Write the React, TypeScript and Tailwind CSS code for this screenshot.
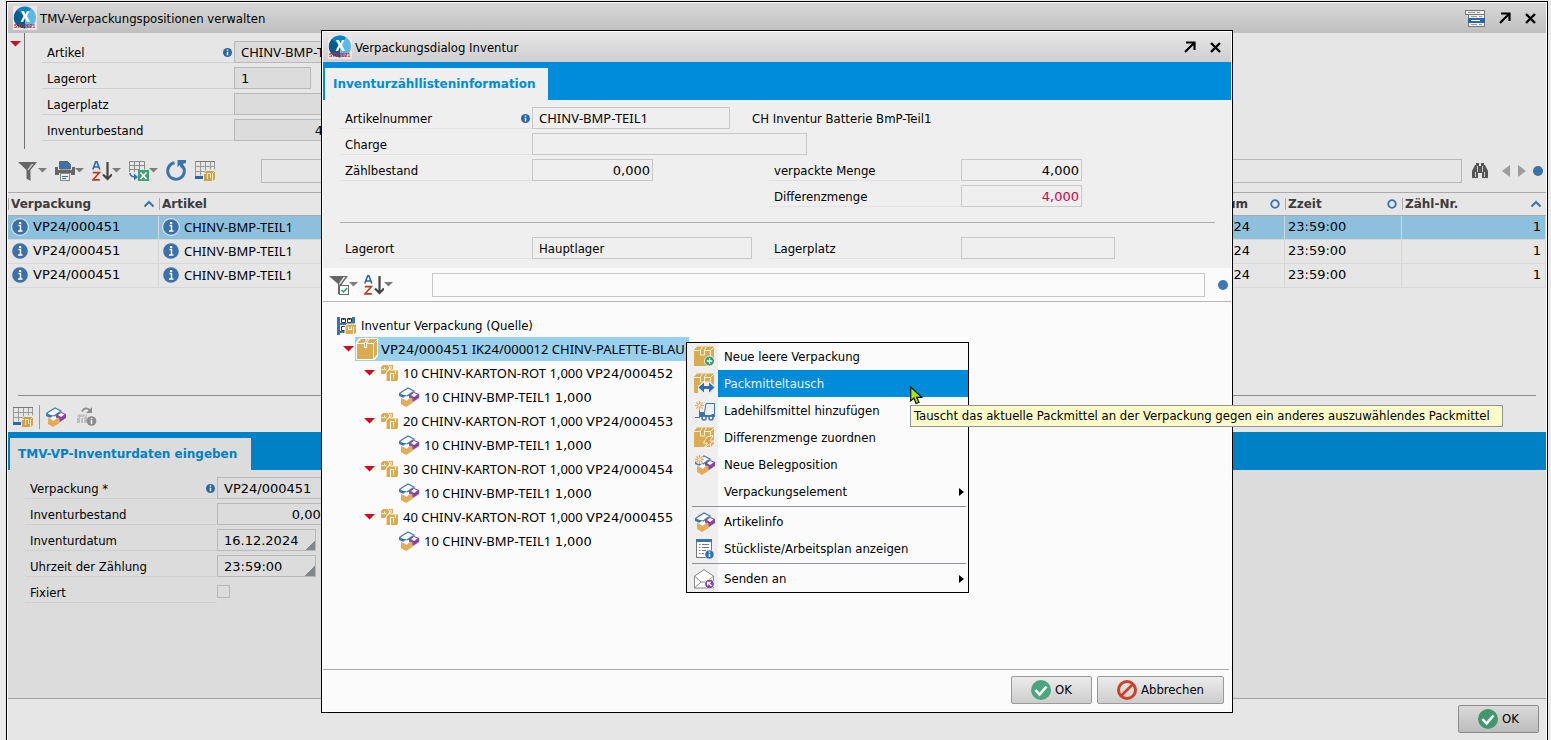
import React from "react";

const textFont = "font-['DejaVu_Sans_Condensed','DejaVu_Sans',sans-serif]";
const codeFont = "font-['Noto_Sans',sans-serif]";
const numberFont = "font-['DejaVu_Sans',sans-serif]";

/* ---------- icons ---------- */

function Logo() {
	return (
		<svg width="24" height="24" viewBox="0 0 24 24" className="shrink-0">
			<rect width="24" height="24" fill="#f2e4e6" />
			<circle cx="12" cy="11.500" r="11" fill="#5bb9e6" />
			<path d="M12 .5a11 11 0 0 0-8 18.500L12 11.500l6-9A11 11 0 0 0 12 .5z" fill="#0b84c6" />
			<path d="M4 4a11 11 0 0 0 2 17l6 1.500V11z" fill="#075c8c" />
			<path d="M8 5h3l1.500 3.500L14 5h2.500L14 10l3 6h-3l-2-4-2 4H7.500l3-6z" fill="#fff" />
			<text x="1" y="22" fontSize="5" fontWeight="bold" fill="#c8202c" fontFamily="Liberation Sans">
				STG2021
			</text>
		</svg>
	);
}

function Caret() {
	return (
		<svg width="9" height="5" viewBox="0 0 9 5" className="shrink-0">
			<path d="M0 0h9L4.500 4.500z" fill="#7d7d7d" />
		</svg>
	);
}

function RedTriangle() {
	return (
		<svg width="11" height="6" viewBox="0 0 11 6" className="shrink-0">
			<path d="M0 0h11L5.500 5.500z" fill="#cf0a23" />
		</svg>
	);
}

function FilterIcon() {
	return (
		<svg width="20" height="20" viewBox="0 0 20 20">
			<path d="M0 1h19l-6.500 8v11l-4-2.500V9z" fill="#666" />
			<path d="M10.500 9.500L15.500 3h-2L9.500 8.500z" fill="#c9c9c9" />
		</svg>
	);
}

function FilterCheckIcon() {
	return (
		<svg width="20" height="20" viewBox="0 0 20 20">
			<path d="M0 1h19l-6 8v3h-1v7h-3V9z" fill="#666" />
			<path d="M10.500 10L16.500 2h-2L10 8.500z" fill="#e6e6e6" />
			<rect x="10.500" y="10.500" width="9" height="9" fill="#fff" stroke="#666" />
			<path d="M12.500 15l2 2 3.500-4" fill="none" stroke="#2a9a6c" strokeWidth="1.500" />
		</svg>
	);
}

function PrinterIcon() {
	return (
		<svg width="20" height="20" viewBox="0 0 20 20">
			<path d="M4.500 .5h8l3 3V8h-11z" fill="#3b70a8" stroke="#666" />
			<path d="M0 6h3v3h14V6h3v8h-4v-2H4v2H0z" fill="#666" />
			<rect x="5.500" y="12.500" width="9" height="7" fill="#eee" stroke="#888" />
			<path d="M7 15.500h6M7 17.500h4" stroke="#3b70a8" />
		</svg>
	);
}

function SortIcon() {
	return (
		<svg width="20" height="20" viewBox="0 0 20 20">
			<path d="M.8 8.500L3.800.5h1l3 8M2 6h5" fill="none" stroke="#2868ae" strokeWidth="1.600" />
			<path d="M.8 11.700h6.500L1 18.800h6.800" fill="none" stroke="#c5361f" strokeWidth="1.700" />
			<path d="M15.500 1v17M11 13.500l4.500 4.500 4.500-4.500" fill="none" stroke="#444" strokeWidth="2.200" />
		</svg>
	);
}

function ExportIcon() {
	return (
		<svg width="20" height="20" viewBox="0 0 20 20">
			<path d="M.5 11V.5h15v8M.5 4.500h15M.5 8.500H11M5.500.5V11M10.500.5v8" fill="none" stroke="#8a8a8a" />
			<path d="M1 12c0 3 2 4 6 4" fill="none" stroke="#3b70a8" strokeWidth="1.600" />
			<path d="M5 12.500L9 16l-4 3.500z" fill="#3b70a8" />
			<rect x="9" y="9" width="11" height="11" fill="#3aa272" />
			<path d="M11.500 11.500l6 6.500M17.500 11.500l-6 6.500" stroke="#fff" strokeWidth="1.800" />
		</svg>
	);
}

function ReloadIcon() {
	return (
		<svg width="21" height="21" viewBox="0 0 21 21">
			<path d="M8.500 2.800A8.300 8.300 0 1 0 17.300 7" fill="none" stroke="#3b73ae" strokeWidth="3" />
			<path d="M11.500 0H20v3l-3 .8 1.500 3.200-3 1.500L13.500 5l-2 2.500z" fill="#3b73ae" />
		</svg>
	);
}

function TableBoxIcon() {
	return (
		<svg width="20" height="20" viewBox="0 0 20 20">
			<path d="M.5 15V.5h19v8M.5 5.500h19M.5 10.500h9M5.500.5v14M10.500.5v9M15.500.5v8" fill="none" stroke="#999" />
			<path d="M0 .5h20" stroke="#777" />
			<path d="M0 15h8v3H0z" fill="#2a67a8" />
			<path d="M9 12l2-2h9v8l-2 2H9z" fill="#cfa045" />
			<path d="M12.500 18v-5.500h3V17M9 12.500h2M17.500 12.500V20M17.500 12.500L20 10" fill="none" stroke="#f6ead0" />
		</svg>
	);
}

// three stacked parts: blue, purple and orange
function PartShapes() {
	return (
		<>
			<path d="M1 6l8-5 6 3-7 5-7-1z" fill="#fff" stroke="#3b78b8" strokeWidth="1.200" />
			<path d="M0 6l7 3v3L0 9z" fill="#3b78b8" />
			<path d="M10 8l5-3 5 2v4l-6 4-4-3z" fill="#8546a4" />
			<path d="M12 8l3-2 3.500 1.500L15 10z" fill="#fff" />
			<path d="M2 11l5 2 5-2.500 1.500 1V16L7 20l-5-3z" fill="#e5ab58" />
			<path d="M4 11l3-2 4 2-3.500 3z" fill="#fff" />
		</>
	);
}

function PartsIcon() {
	return (
		<svg width="20" height="20" viewBox="0 0 20 20" className="shrink-0">
			<PartShapes />
		</svg>
	);
}

function Star() {
	return (
		<>
			<path d="M4.500 0v9M0 4.500h9M1.300 1.300l6.400 6.400M7.700 1.300L1.300 7.700" stroke="#e8a54a" strokeWidth="1.200" />
			<circle cx="4.500" cy="4.500" r="1.200" fill="#fff" />
		</>
	);
}

function NewPartsIcon() {
	return (
		<svg width="20" height="20" viewBox="0 0 20 20" className="shrink-0">
			<PartShapes />
			<circle cx="4.500" cy="4.500" r="4.500" fill="#efefef" />
			<Star />
		</svg>
	);
}

function GreyInfoIcon() {
	return (
		<svg width="20" height="20" viewBox="0 0 20 20">
			<path d="M5 4.500c2-4 6-4 8-1" fill="none" stroke="#8d8d8d" strokeWidth="1.800" />
			<path d="M15 0v6H9z" fill="#8d8d8d" />
			<path d="M0 9l1.500-1.500H10V16H0z" fill="#bdbdbd" />
			<path d="M3.500 16v-5.500h3V16M8.500 7.500L7 10.500M0 10.500h2" fill="none" stroke="#e6e6e6" />
			<circle cx="14.500" cy="14" r="4.800" fill="#8d8d8d" />
			<path d="M14.500 13v4M14.500 11v1.300" stroke="#eee" strokeWidth="1.600" />
		</svg>
	);
}

function BoxShapes() {
	return (
		<>
			<path d="M0 4l3-3.500h17v16L17 20H0z" fill="#d9ac52" />
			<path
				d="M0 4.500h6.500M10.500 4.500h6M16.500 4.500V20M16.500 4.500L20 1M8.500 .5L6.500 4v5h4V4l2-3.500"
				fill="none"
				stroke="#f8eed6"
			/>
		</>
	);
}

function BoxIcon() {
	return (
		<svg width="22" height="22" viewBox="0 0 22 22" className="shrink-0">
			<path d="M0 4l4-4h16l2 1v17l-3.500 4H0z" fill="#fff" />
			<path d="M1 5l4-4h16v15.500L17.500 21H1z" fill="#d9ac52" />
			<path d="M1 5.500h7M11 5.500h6.500V21M17.500 5.500L21 2" fill="none" stroke="#fff" />
			<path d="M10.500 1L8 5v5h3V5l2.500-4z" fill="#fff" />
			<path d="M9.500 5v4M10 4l2-3" stroke="#d9ac52" />
		</svg>
	);
}

function BoxesIcon() {
	return (
		<svg width="18" height="18" viewBox="0 0 18 18" className="shrink-0">
			<path d="M0 3l2-2h10v9H0z" fill="#d9ac52" />
			<path d="M3.500 3.500v2h2M7 1l1.500 2v3M.5 5.500h2M10 2v3" fill="none" stroke="#fff" />
			<path d="M5 9l2-3h10.500v10l-2 1.500H5z" fill="#d9ac52" stroke="#fff" />
			<path d="M9.500 17.500V9.500h3v5M14.500 7v3" fill="none" stroke="#fff" />
		</svg>
	);
}

function WarehouseIcon() {
	return (
		<svg width="20" height="18" viewBox="0 0 20 18" className="shrink-0">
			<path d="M0 0h3v18H0zM15 0h3v8h-3zM0 6h18v2H0zM0 14h8v2H0z" fill="#3b73ae" />
			<path d="M4.500 1.500h4v4h-4zM10.500 1.500h4v4h-4zM4.500 9.500h4v4h-4z" fill="#fff" stroke="#333" />
			<path d="M6.500 1v2M12.500 1v2" stroke="#333" strokeWidth="2" />
			<path d="M8 10l2-3h9.500v8.500l-2 2H8z" fill="#d9ac52" stroke="#fff" />
			<path d="M11.500 9.500v3h3v-3M16.500 10v7" fill="none" stroke="#fff" />
		</svg>
	);
}

function BoxPlusIcon() {
	return (
		<svg width="21" height="21" viewBox="0 0 21 21">
			<BoxShapes />
			<circle cx="15.500" cy="15" r="5" fill="#3a9d70" stroke="#efefef" />
			<path d="M12.800 15h5.400M15.500 12.300v5.400" stroke="#fff" strokeWidth="1.300" />
		</svg>
	);
}

function BoxSwapIcon() {
	return (
		<svg width="21" height="21" viewBox="0 0 21 21">
			<BoxShapes />
			<path d="M4 20.500V13l6-4.500h5l6 4v8z" fill="#efefef" />
			<path d="M4.500 14.500L10 9.500v3.500h5V9.500l5.500 5-5.500 5V16h-5v3.500z" fill="#2e6fb4" />
		</svg>
	);
}

function BoxFlashIcon() {
	return (
		<svg width="21" height="21" viewBox="0 0 21 21">
			<BoxShapes />
			<path d="M19 8.500l-6 1.500-3.500 6h4L10 21l10-7h-4z" fill="#f09a2e" stroke="#efefef" />
		</svg>
	);
}

function TruckIcon() {
	return (
		<svg width="20" height="20" viewBox="0 0 20 20">
			<Star />
			<path d="M0 16.500h4.500V9.500M4.500 11.500h5l1.500-9h8.500v11h-3M9.500 11.500v3" fill="none" stroke="#3b73ae" />
			<path d="M5 12h5v2h10v2H5z" fill="#3b73ae" />
			<circle cx="9" cy="17" r="2" fill="#fff" stroke="#3b73ae" strokeWidth="1.500" />
			<circle cx="16" cy="17" r="2" fill="#fff" stroke="#3b73ae" strokeWidth="1.500" />
		</svg>
	);
}

function ListInfoIcon() {
	return (
		<svg width="18" height="20" viewBox="0 0 18 20">
			<rect x=".5" y=".5" width="15" height="18" fill="#fff" stroke="#777" />
			<path d="M0 0h16v3H0z" fill="#3b73ae" />
			<path d="M3 5.500h1.500M6 5.500h7M3 8.500h1.500M6 8.500h7M3 11.500h1.500M6 11.500h4M3 14.500h1.500M6 14.500h2" stroke="#777" />
			<circle cx="13.500" cy="15.500" r="4.500" fill="#2e6fb4" stroke="#efefef" strokeWidth=".6" />
			<path d="M13.500 14.700v3.300M13.500 12.500v1.300" stroke="#fff" strokeWidth="1.500" />
		</svg>
	);
}

function MailIcon() {
	return (
		<svg width="21" height="20" viewBox="0 0 21 20">
			<path d="M.5 7L10 .5 19.500 7v12H.5z" fill="#fff" stroke="#888" />
			<path d="M.5 7l6.500 6h6l6.500-6M.5 19L7 13" fill="none" stroke="#888" />
			<circle cx="15.500" cy="15" r="4.800" fill="#8546a4" stroke="#efefef" />
			<path d="M17.500 17l-3-3M13.700 16.500v-3.200H17" fill="none" stroke="#fff" strokeWidth="1.300" />
		</svg>
	);
}

function InfoDot() {
	return (
		<svg width="9" height="9" viewBox="0 0 9 9" className="shrink-0">
			<circle cx="4.500" cy="4.500" r="4.500" fill="#2b66a8" />
			<path d="M4.500 3.800v3.500M4.500 1.500v1.300" stroke="#fff" strokeWidth="1.500" />
		</svg>
	);
}

function InfoBadge({ selected }: { selected?: boolean }) {
	return (
		<svg width="18" height="18" viewBox="0 0 18 18" className="shrink-0">
			{selected && <circle cx="9" cy="9" r="9" fill="#dbe6ee" />}
			<circle cx="9" cy="9" r="7.800" fill="#3b70a8" />
			<path d="M7.500 7.500h2v5M7 13h4.500" fill="none" stroke="#fff" strokeWidth="1.400" />
			<path d="M8 4h2.200v2H8z" fill="#fff" />
		</svg>
	);
}

function BinocularsIcon() {
	return (
		<svg width="16" height="17" viewBox="0 0 16 17">
			<path d="M3 3h1V1h3v3h2V1h3v2h1l3 6v7h-6v-5H6v5H0V9z" fill="#555" />
			<path d="M5.500 4v6M10.500 4v6M3.500 10v5M12.500 10v5" stroke="#ccc" />
		</svg>
	);
}

function ExpandIcon() {
	return (
		<svg width="12" height="12" viewBox="0 0 12 12">
			<path d="M1 11L10 2M2 1.500h8.500V9" fill="none" stroke="#000" strokeWidth="2.200" />
		</svg>
	);
}

function CloseIcon() {
	return (
		<svg width="11" height="11" viewBox="0 0 11 11">
			<path d="M1 1l9 9M10 1L1 10" stroke="#000" strokeWidth="2.400" />
		</svg>
	);
}

function MenuWindowIcon() {
	return (
		<svg width="20" height="17" viewBox="0 0 20 17">
			<rect x=".5" y=".5" width="19" height="4" fill="#eee" stroke="#777" />
			<rect x="3.500" y="4.500" width="16" height="12" fill="#eee" stroke="#777" />
			<path d="M3 8h17v5H3z" fill="#2e66a5" />
			<path d="M3 2.500h7M12 2.500h3M6 6.500h6M14 6.500h3M6 14.500h6M14 14.500h3" stroke="#999" />
			<path d="M6 10.500h9" stroke="#fff" />
		</svg>
	);
}

function CheckCircle({ dark }: { dark?: boolean }) {
	return (
		<svg width="20" height="20" viewBox="0 0 20 20">
			<circle cx="10" cy="10" r="10" fill={dark ? "#42966f" : "#49a681"} />
			<path d="M4.500 10l4 4.500 7-8" fill="none" stroke="#fff" strokeWidth="2.600" />
		</svg>
	);
}

function CancelCircle() {
	return (
		<svg width="20" height="20" viewBox="0 0 20 20">
			<circle cx="10" cy="10" r="8.500" fill="none" stroke="#cb4229" strokeWidth="3" />
			<path d="M4 16L16 4" stroke="#cb4229" strokeWidth="2.600" />
		</svg>
	);
}

function Cursor() {
	return (
		<svg width="13" height="19" viewBox="0 0 13 19">
			<path d="M.7 1v14l3.300-3 2 5.500 3-1-2.300-5.200h5z" fill="#a6e800" stroke="#111" strokeWidth="1.200" />
		</svg>
	);
}

/* ---------- building blocks ---------- */

type FieldProps = {
	id: string;
	label: string;
	info?: boolean;
	tone?: "dark" | "light";
	className?: string;
	children: React.ReactNode;
};

function Field({ id, label, info, tone = "dark", className = "", children }: FieldProps) {
	return (
		<div className={`flex h-[22px] ${className}`}>
			<label
				htmlFor={id}
				className={`flex w-48 shrink-0 items-center justify-between border-b pt-0.5 pr-0.5 pl-[5px] ${
					tone === "dark" ? "border-[#cfcfcf]" : "border-[#e2e2e2]"
				}`}
			>
				{label}
				{info && <InfoDot />}
			</label>
			{children}
		</div>
	);
}

type BoxProps = { id: string; value?: string; tone?: "dark" | "light"; className: string };

function TextBox({ id, value = "", tone = "dark", className }: BoxProps) {
	return (
		<input
			id={id}
			readOnly
			defaultValue={value}
			className={`h-[22px] border outline-none ${
				tone === "dark" ? "border-[#b8b8b8] bg-[#dcdcdc]" : "border-[#c8c8c8] bg-[#efefef]"
			} ${className}`}
		/>
	);
}

function ToolButton({ label, caret, children }: { label: string; caret?: boolean; children: React.ReactNode }) {
	return (
		<button aria-label={label} className="flex items-center">
			{children}
			{caret && <Caret />}
		</button>
	);
}

function SortMark({ kind }: { kind: "up" | "none" }) {
	return (
		<svg width="10" height="10" viewBox="0 0 10 10" className="shrink-0">
			{kind === "up" ? (
				<path d="M.5 7.500L5 3l4.500 4.500" fill="none" stroke="#3b73ae" strokeWidth="2" />
			) : (
				<circle cx="5" cy="5" r="3.800" fill="none" stroke="#3b73ae" strokeWidth="1.800" />
			)}
		</svg>
	);
}

/* ---------- main window ---------- */

const columns: { title: string; sort: "up" | "none" }[] = [
	{ title: "Verpackung", sort: "up" },
	{ title: "Artikel", sort: "none" },
	{ title: "Zähldatum", sort: "none" },
	{ title: "Zzeit", sort: "none" },
	{ title: "Zähl-Nr.", sort: "up" },
];

const rows = [1, 2, 3];

function PositionTable() {
	return (
		<table className="w-full table-fixed border-separate border-spacing-0">
			<colgroup>
				<col className="w-[151px]" />
				<col />
				<col className="w-[113px]" />
				<col className="w-[117px]" />
				<col className="w-[144px]" />
			</colgroup>
			<thead>
				<tr className={`${numberFont} text-xs font-bold text-[#3c3c3c]`}>
					{columns.map((column) => (
						<th key={column.title} className="h-6 border-y border-[#aaa] p-0 text-left">
							<div className="flex h-3 items-center justify-between border-l border-[#aaa] pr-[5px] pl-0.5 leading-3">
								{column.title}
								<SortMark kind={column.sort} />
							</div>
						</th>
					))}
				</tr>
			</thead>
			<tbody>
				{rows.map((row) => {
					const selected = row === 1;
					const cell = `h-6 border-b border-r border-[#d7d7d7] px-0 pt-0 pb-0.5 ${selected ? "bg-[#8dc0dd]" : ""}`;
					return (
						<tr key={row}>
							<td className={cell}>
								<div className={`flex items-center gap-1 pl-[3px] ${numberFont}`}>
									<InfoBadge selected={selected} />
									VP24/000451
								</div>
							</td>
							<td className={cell}>
								<div className={`flex items-center gap-1 pl-[3px] ${codeFont}`}>
									<InfoBadge selected={selected} />
									CHINV-BMP-TEIL1
								</div>
							</td>
							<td className={`${cell} text-right ${numberFont}`}>
								<span className="pr-[34px]">16.12.24</span>
							</td>
							<td className={`${cell} ${numberFont}`}>
								<span className="pl-[3px]">23:59:00</span>
							</td>
							<td className={`${cell} text-right ${numberFont}`}>
								<span className="pr-1">1</span>
							</td>
						</tr>
					);
				})}
			</tbody>
		</table>
	);
}

function MainWindow() {
	return (
		<section className="mt-px mr-[3px] ml-1.5 flex flex-1 flex-col border border-b-0 border-black">
			<div className="flex flex-1 flex-col border border-b-0 border-white bg-[#e6e6e6]">
				<header className="flex h-[30px] items-center bg-gradient-to-b from-[#d8d8d8] to-[#bfbfbf] pr-2.5 pl-[5px]">
					<Logo />
					<h1 className="flex-1 pt-0.5 pl-[3px]">TMV-Verpackungspositionen verwalten</h1>
					<div className="flex items-center gap-3.5">
						<button aria-label="Menü"><MenuWindowIcon /></button>
						<button aria-label="Maximieren"><ExpandIcon /></button>
						<button aria-label="Schließen"><CloseIcon /></button>
					</div>
				</header>

				<div className="flex">
					<div className="w-4 pt-2 pl-0.5">
						<RedTriangle />
					</div>
					<div className="flex flex-1 flex-col gap-1 border-l border-[#707070] py-2 pl-[17px]">
						<Field id="artikel" label="Artikel" info>
							<TextBox id="artikel" value="CHINV-BMP-TEIL1" className={`w-[198px] px-1.5 ${codeFont}`} />
						</Field>
						<Field id="lagerort" label="Lagerort">
							<TextBox id="lagerort" value="1" className={`w-[77px] px-1.5 ${numberFont}`} />
						</Field>
						<Field id="lagerplatz" label="Lagerplatz">
							<TextBox id="lagerplatz" className="w-[154px]" />
						</Field>
						<Field id="bestand" label="Inventurbestand">
							<TextBox id="bestand" value="4,000" className={`w-[121px] px-0.5 text-right ${numberFont}`} />
						</Field>
					</div>
				</div>

				<div className="flex h-[43px] items-center pl-2.5">
					<div className="flex w-[243px] items-center gap-2">
						<ToolButton label="Filter" caret><FilterIcon /></ToolButton>
						<ToolButton label="Drucken" caret><PrinterIcon /></ToolButton>
						<ToolButton label="Sortieren" caret><SortIcon /></ToolButton>
						<ToolButton label="Exportieren" caret><ExportIcon /></ToolButton>
						<ToolButton label="Aktualisieren"><ReloadIcon /></ToolButton>
						<ToolButton label="Tabelle"><TableBoxIcon /></ToolButton>
					</div>
					<input aria-label="Suche" className="h-6 flex-1 border border-[#b8b8b8] bg-[#e6e6e6] px-1.5" />
					<div className="flex w-[84px] items-center pl-2.5">
						<button aria-label="Suchen"><BinocularsIcon /></button>
						<button aria-label="Zurück" className="ml-3.5">
							<svg width="8" height="12" viewBox="0 0 8 12"><path d="M8 0v12L0 6z" fill="#9c9c9c" /></svg>
						</button>
						<button aria-label="Weiter" className="ml-2">
							<svg width="8" height="12" viewBox="0 0 8 12"><path d="M0 0v12l8-6z" fill="#9c9c9c" /></svg>
						</button>
						<span className="ml-[7px] size-2.5 rounded-full bg-[#3b70a8]" />
					</div>
				</div>

				<PositionTable />
				<div className="h-[107px]" />
				<hr className="mx-2.5 border-[#8c8c8c]" />

				<div className="flex h-9 items-center pt-1.5 pl-[5px]">
					<button aria-label="Tabelle"><TableBoxIcon /></button>
					<div className="mx-1.5 h-6 border-l border-[#9a9a9a]" />
					<button aria-label="Teile"><PartsIcon /></button>
					<button aria-label="Packmittelinfo" className="ml-[11px]"><GreyInfoIcon /></button>
				</div>

				<div className="flex h-[38px] bg-[#0081c6] pt-1.5 pl-0.5">
					<button className={`w-[241px] bg-[#dcdcdc] pl-2 text-left text-xs font-bold text-[#0081c6] ${numberFont}`}>
						TMV-VP-Inventurdaten eingeben
					</button>
				</div>
				<div className="flex flex-1 flex-col gap-1 bg-[#dcdcdc] pt-[7px] pl-[17px]">
					<Field id="verpackung" label="Verpackung *" info>
						<TextBox id="verpackung" value="VP24/000451" className={`w-[198px] px-1.5 ${numberFont}`} />
					</Field>
					<Field id="inventurbestand" label="Inventurbestand">
						<TextBox id="inventurbestand" value="0,000" className={`w-[115px] px-0.5 text-right ${numberFont}`} />
					</Field>
					<Field id="datum" label="Inventurdatum">
						<div className="relative">
							<TextBox id="datum" value="16.12.2024" className={`w-[99px] px-1.5 ${numberFont}`} />
							<span className="absolute right-px bottom-px size-2.5 bg-[linear-gradient(135deg,transparent_50%,#82878c_50%)]" />
						</div>
					</Field>
					<Field id="uhrzeit" label="Uhrzeit der Zählung">
						<div className="relative">
							<TextBox id="uhrzeit" value="23:59:00" className={`w-[99px] px-1.5 ${numberFont}`} />
							<span className="absolute right-px bottom-px size-2.5 bg-[linear-gradient(135deg,transparent_50%,#82878c_50%)]" />
						</div>
					</Field>
					<Field id="fixiert" label="Fixiert">
						<input
							id="fixiert"
							type="checkbox"
							className="mt-1 size-[13px] appearance-none border border-[#b8b8b8]"
						/>
					</Field>
				</div>

				<footer className="flex h-[42px] items-start justify-end border-t border-[#a0a0a0] pt-1.5 pr-[7px]">
					<button className="flex h-7 w-[81px] items-center justify-center gap-1 rounded-xs border border-[#8a8a8a] bg-gradient-to-b from-[#dadada] to-[#bdbdbd]">
						<CheckCircle dark />
						OK
					</button>
				</footer>
			</div>
		</section>
	);
}

/* ---------- dialog ---------- */

const cartons = [
	{ name: "10 CHINV-KARTON-ROT 1,000", pack: "VP24/000452" },
	{ name: "20 CHINV-KARTON-ROT 1,000", pack: "VP24/000453" },
	{ name: "30 CHINV-KARTON-ROT 1,000", pack: "VP24/000454" },
	{ name: "40 CHINV-KARTON-ROT 1,000", pack: "VP24/000455" },
];

function PackingTree() {
	return (
		<ul className={`flex-1 pt-[11px] pl-3.5 ${codeFont}`}>
			<li>
				<div className={`flex h-6 items-center gap-1 pt-0.5 ${textFont}`}>
					<WarehouseIcon />
					Inventur Verpackung (Quelle)
				</div>
				<ul className="pl-1.5">
					<li>
						<div className="flex h-6 items-center">
							<RedTriangle />
							<div className="ml-px flex h-6 w-[334px] items-center gap-[3px] bg-[#99d0ee] pl-px whitespace-nowrap">
								<BoxIcon />
								<span>
									<span className={numberFont}>VP24/000451</span> IK24/000012 CHINV-PALETTE-BLAU
								</span>
							</div>
						</div>
						<ul className="pl-[21px]">
							{cartons.map((carton) => (
								<li key={carton.pack}>
									<div className="flex h-6 items-center">
										<RedTriangle />
										<div className="flex items-center gap-1 pl-1.5">
											<BoxesIcon />
											<span>
												{carton.name} <span className={numberFont}>{carton.pack}</span>
											</span>
										</div>
									</div>
									<div className="flex h-6 items-center gap-[5px] pl-[35px]">
										<PartsIcon />
										<span>
											10 CHINV-BMP-TEIL1 <span className={numberFont}>1,000</span>
										</span>
									</div>
								</li>
							))}
						</ul>
					</li>
				</ul>
			</li>
		</ul>
	);
}

function PackingDialog() {
	return (
		<section
			role="dialog"
			aria-label="Verpackungsdialog Inventur"
			className="absolute top-[30px] right-[318px] left-[321px] h-[683px] border border-black"
		>
			<div className="flex h-full flex-col border border-white bg-[#fbfbfb]">
				<header className="flex h-[30px] items-center bg-gradient-to-b from-[#e7e7e7] to-[#cecece] pr-2.5 pl-[5px]">
					<Logo />
					<h2 className="flex-1 pt-0.5 pl-[3px]">Verpackungsdialog Inventur</h2>
					<div className="flex items-center gap-3.5">
						<button aria-label="Maximieren"><ExpandIcon /></button>
						<button aria-label="Schließen"><CloseIcon /></button>
					</div>
				</header>
				<div className="flex h-[38px] bg-[#008cd9] pt-1.5 pl-0.5">
					<button className={`w-[223px] bg-[#efefef] pl-2 text-left text-xs font-bold text-[#008cd9] ${numberFont}`}>
						Inventurzähllisteninformation
					</button>
				</div>

				<div className="bg-[#efefef] pt-[7px] pr-4 pb-[9px] pl-[17px]">
					<div className="grid grid-cols-[429px_1fr] gap-y-1">
						<Field id="nummer" label="Artikelnummer" info tone="light" className="col-span-2">
							<TextBox id="nummer" tone="light" value="CHINV-BMP-TEIL1" className={`w-[198px] px-1.5 ${codeFont}`} />
							<span className="self-center pt-0.5 pl-[22px]">CH Inventur Batterie BmP-Teil1</span>
						</Field>
						<Field id="charge" label="Charge" tone="light" className="col-span-2">
							<TextBox id="charge" tone="light" className="w-[275px]" />
						</Field>
						<Field id="zaehl" label="Zählbestand" tone="light">
							<TextBox id="zaehl" tone="light" value="0,000" className={`w-[121px] px-0.5 text-right ${numberFont}`} />
						</Field>
						<Field id="menge" label="verpackte Menge" tone="light">
							<TextBox id="menge" tone="light" value="4,000" className={`w-[121px] px-0.5 text-right ${numberFont}`} />
						</Field>
						<Field id="differenz" label="Differenzmenge" tone="light" className="col-start-2">
							<TextBox
								id="differenz"
								tone="light"
								value="4,000"
								className={`w-[121px] px-0.5 text-right text-[#cf0044] ${numberFont}`}
							/>
						</Field>
					</div>
					<hr className="mt-[15px] mb-3.5 border-[#aaa]" />
					<div className="grid grid-cols-[429px_1fr]">
						<Field id="ort" label="Lagerort" tone="light">
							<TextBox id="ort" tone="light" value="Hauptlager" className="w-[220px] px-1.5" />
						</Field>
						<Field id="platz" label="Lagerplatz" tone="light">
							<TextBox id="platz" tone="light" className="w-[154px]" />
						</Field>
					</div>
				</div>

				<div className="flex h-[34px] items-center border-b border-[#b5b5b5] pl-1.5">
					<div className="flex w-[103px] items-center gap-1.5">
						<ToolButton label="Filter" caret><FilterCheckIcon /></ToolButton>
						<ToolButton label="Sortieren" caret><SortIcon /></ToolButton>
					</div>
					<input aria-label="Suche" className="h-6 flex-1 border border-[#c8c8c8] bg-[#fbfbfb] px-1.5" />
					<span className="mr-[3px] ml-[13px] size-2.5 rounded-full bg-[#3b78b8]" />
				</div>

				<PackingTree />

				<footer className="mr-0.5 flex h-[42px] items-start justify-end gap-[5px] border-t border-[#a8a8a8] pt-1.5 pr-[5px]">
					<button className="flex h-7 w-[81px] items-center justify-center gap-1 rounded-xs border border-[#9a9a9a] bg-gradient-to-b from-[#ececec] to-[#cdcdcd]">
						<CheckCircle />
						OK
					</button>
					<button className="flex h-7 w-[127px] items-center justify-center gap-1 rounded-xs border border-[#9a9a9a] bg-gradient-to-b from-[#ececec] to-[#cdcdcd]">
						<CancelCircle />
						Abbrechen
					</button>
				</footer>
			</div>
		</section>
	);
}

/* ---------- context menu ---------- */

type MenuEntry = { label: string; icon?: React.ReactNode; active?: boolean; sub?: boolean };

const menuGroups: MenuEntry[][] = [
	[
		{ label: "Neue leere Verpackung", icon: <BoxPlusIcon /> },
		{ label: "Packmitteltausch", icon: <BoxSwapIcon />, active: true },
		{ label: "Ladehilfsmittel hinzufügen", icon: <TruckIcon /> },
		{ label: "Differenzmenge zuordnen", icon: <BoxFlashIcon /> },
		{ label: "Neue Belegposition", icon: <NewPartsIcon /> },
		{ label: "Verpackungselement", sub: true },
	],
	[
		{ label: "Artikelinfo", icon: <PartsIcon /> },
		{ label: "Stückliste/Arbeitsplan anzeigen", icon: <ListInfoIcon /> },
	],
	[{ label: "Senden an", icon: <MailIcon />, sub: true }],
];

function ContextMenu() {
	return (
		<div
			role="menu"
			className="absolute top-[342px] left-[686px] w-[283px] border border-black bg-[linear-gradient(to_right,#efefef_31px,#fbfbfb_31px)]"
		>
			{menuGroups.map((group, index) => (
				<div key={index}>
					{index > 0 && <hr className="mt-px mr-0.5 mb-px ml-[5px] border-[#8e9499]" />}
					{group.map((entry) => (
						<button key={entry.label} role="menuitem" className="flex h-[27px] w-full items-stretch text-left">
							<span className="flex w-[31px] items-center justify-center pl-1">{entry.icon}</span>
							<span
								className={`flex flex-1 items-center justify-between pr-1 pl-1.5 ${
									entry.active ? "bg-[#008cd9] text-[#e8f4fb]" : ""
								}`}
							>
								{entry.label}
								{entry.sub && (
									<svg width="5" height="8" viewBox="0 0 5 8"><path d="M0 0v8l5-4z" /></svg>
								)}
							</span>
						</button>
					))}
				</div>
			))}
		</div>
	);
}

export default function App() {
	return (
		<main className={`relative flex h-screen overflow-hidden bg-[#ebebeb] text-[13px] leading-4 text-black ${textFont}`}>
			<MainWindow />
			<PackingDialog />
			<ContextMenu />
			<div className="absolute top-[386px] left-[910px] z-10"><Cursor /></div>
			<div
				role="tooltip"
				className="absolute top-[405px] left-[910px] w-[593px] border border-[#8e9499] bg-[#fcfcc8] px-[3px] py-0.5 whitespace-nowrap"
			>
				Tauscht das aktuelle Packmittel an der Verpackung gegen ein anderes auszuwählendes Packmittel
			</div>
		</main>
	);
}
